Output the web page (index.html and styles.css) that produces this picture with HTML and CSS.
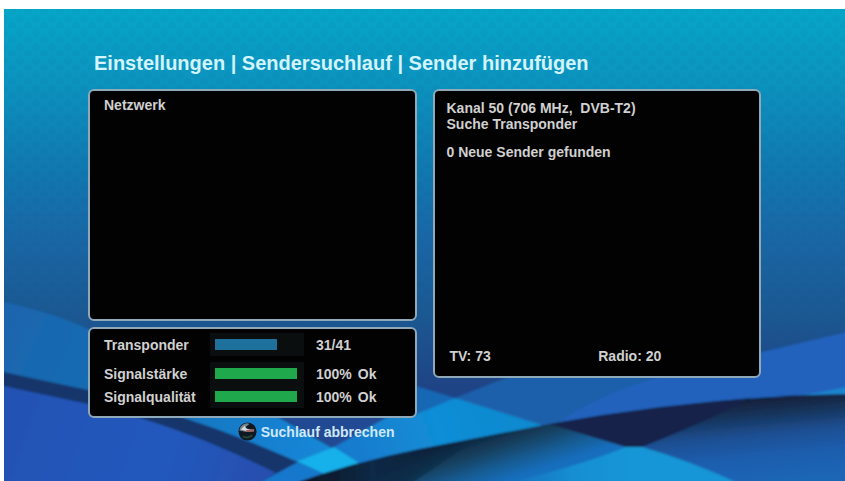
FILE: index.html
```html
<!DOCTYPE html>
<html lang="de">
<head>
<meta charset="utf-8">
<meta name="viewport" content="width=device-width, initial-scale=1">
<title>Sender hinzufügen</title>
<link rel="stylesheet" href="styles.css">
</head>
<body>
<main class="screen">
  <svg class="backdrop" viewBox="4 9 841 472" preserveAspectRatio="none" aria-hidden="true">
    <defs>
      <linearGradient id="sky" x1="0" y1="0" x2="0" y2="1">
        <stop offset="0" stop-color="#06a6c8"/>
        <stop offset=".14" stop-color="#0b95c0"/>
        <stop offset=".34" stop-color="#1178b0"/>
        <stop offset=".48" stop-color="#1967a6"/>
        <stop offset=".64" stop-color="#1b5993"/>
        <stop offset=".8" stop-color="#1f4486"/>
      </linearGradient>
      <linearGradient id="band" gradientUnits="userSpaceOnUse" x1="4" y1="320" x2="340" y2="470">
        <stop offset="0" stop-color="#1b65ae"/>
        <stop offset=".4" stop-color="#166fb4"/>
        <stop offset=".75" stop-color="#177fce"/>
        <stop offset="1" stop-color="#1589d8"/>
      </linearGradient>
      <linearGradient id="corner" gradientUnits="userSpaceOnUse" x1="20" y1="400" x2="260" y2="481">
        <stop offset="0" stop-color="#2453b4"/>
        <stop offset=".6" stop-color="#2359bc"/>
        <stop offset="1" stop-color="#264fb0"/>
      </linearGradient>
      <linearGradient id="rise" gradientUnits="userSpaceOnUse" x1="340" y1="460" x2="500" y2="400">
        <stop offset="0" stop-color="#1878cc"/>
        <stop offset=".6" stop-color="#118ed6"/>
        <stop offset="1" stop-color="#118ad0"/>
      </linearGradient>
      <linearGradient id="wave" gradientUnits="userSpaceOnUse" x1="760" y1="396" x2="768" y2="481">
        <stop offset="0" stop-color="#101d36"/>
        <stop offset=".2" stop-color="#173257"/>
        <stop offset=".45" stop-color="#1c4f92"/>
        <stop offset=".7" stop-color="#1c5dad"/>
        <stop offset="1" stop-color="#1c66b6"/>
      </linearGradient>
      <linearGradient id="teal" gradientUnits="userSpaceOnUse" x1="475" y1="436" x2="491" y2="485">
        <stop offset="0" stop-color="#0e253f"/>
        <stop offset=".35" stop-color="#15405f"/>
        <stop offset=".7" stop-color="#185c94"/>
        <stop offset="1" stop-color="#176ebc"/>
      </linearGradient>
      <linearGradient id="glow" gradientUnits="userSpaceOnUse" x1="490" y1="0" x2="630" y2="0">
        <stop offset="0" stop-color="#1480ca" stop-opacity="0"/>
        <stop offset=".6" stop-color="#148fd2"/>
        <stop offset="1" stop-color="#1296d6"/>
      </linearGradient>
      <linearGradient id="shade" gradientUnits="userSpaceOnUse" x1="300" y1="0" x2="480" y2="0">
        <stop offset="0" stop-color="#071421"/>
        <stop offset=".4" stop-color="#0d2946"/>
        <stop offset="1" stop-color="#0b1c34" stop-opacity="0"/>
      </linearGradient>
      <pattern id="grain" width="16" height="14" patternUnits="userSpaceOnUse">
        <path d="M0 3l4-3 4 3v4l-4 3-4-3zM8 10l4-3 4 3v4H8z" fill="#044f80" fill-opacity=".05"/>
      </pattern>
      <filter id="soft" x="0" y="0" width="1" height="1">
        <feGaussianBlur stdDeviation="0.8"/>
      </filter>
    </defs>
    <rect x="4" y="9" width="841" height="472" fill="url(#sky)"/>
    <rect x="4" y="9" width="841" height="340" fill="url(#grain)"/>
    <g filter="url(#soft)">
      <path d="M-6 300Q50 311 88 329L278 417L362 465L345 491H290L-6 386z" fill="url(#band)"/>
      <path d="M262 405H410L334 447z" fill="#214a93"/>
      <path d="M255 485L334 447L400 410L417 400L455 398L560 420V430L420 456L300 486z" fill="url(#rise)"/>
      <path d="M410 384L455 398L410 417z" fill="#1768b4"/>
      <path d="M455 398L510 376H680L562 425L548 427z" fill="#1d60ab"/>
      <path d="M555 425Q600 394 650 380L762 352L855 330V406L700 412z" fill="#2162bd"/>
      <path d="M790 397Q820 393 855 385V400L780 402z" fill="#1c84cf"/>
      <path d="M334 447L359 463L322 477L296 462z" fill="#13b0ea"/>
      <path d="M-6 370L88 390Q200 418 298 462L324 474L310 491H240L-6 386z" fill="#15356b"/>
      <path d="M298 462L324 474L300 491H244z" fill="#1778cc"/>
      <path d="M-6 384L88 404Q180 425 276 473L244 491H-6z" fill="url(#corner)"/>
      <path d="M290 485Q350 463 420 449L550 424Q700 396 855 394V491H290z" fill="url(#wave)"/>
      <path d="M290 485Q350 463 420 449L550 424L626 447L640 491H290z" fill="url(#teal)"/>
      <path d="M550 424Q620 411 750 398Q710 420 642 447H626z" fill="#15234a"/>
      <path d="M626 447H642Q695 462 755 491H470Q570 470 626 447z" fill="url(#glow)"/>
      <path d="M290 485Q350 463 420 449L480 438L400 491H290z" fill="url(#shade)"/>
    </g>
  </svg>

  <h1 class="title">Einstellungen | Sendersuchlauf | Sender hinzufügen</h1>

  <div class="columns">
    <div class="column">
      <section class="panel network">
        <h2 class="label">Netzwerk</h2>
      </section>
      <section class="panel status">
        <div class="row row-first">
          <label for="transponder">Transponder</label>
          <span class="track"><progress class="bar" id="transponder" value="31" max="41"></progress></span>
          <span>31/41</span>
        </div>
        <div class="row">
          <label for="strength">Signalstärke</label>
          <span class="track"><progress class="bar bar-green" id="strength" value="100" max="100"></progress></span>
          <span class="value"><span>100%</span><span>Ok</span></span>
        </div>
        <div class="row">
          <label for="quality">Signalqualität</label>
          <span class="track"><progress class="bar bar-green" id="quality" value="100" max="100"></progress></span>
          <span class="value"><span>100%</span><span>Ok</span></span>
        </div>
      </section>
      <button class="cancel" type="button">
        <svg class="cancel-icon" viewBox="0 0 20 20" aria-hidden="true">
          <circle cx="10" cy="10" r="9.500" fill="#101820"/>
          <path d="M1.500 9Q2 3 8 1.500Q10 1 12 2L7 6L13 8L17 7.500V10L9 10.500z" fill="#77858f"/>
          <path d="M3 8L7 4L9 7L15 8.500L9 9.500z" fill="#d5dadd"/>
          <path d="M9 8.500L17 7.500L16 10L8 10.500z" fill="#a65e60"/>
          <path d="M5 15Q10 18 15 14" fill="none" stroke="#23483a" stroke-width="2"/>
        </svg>
        Suchlauf abbrechen
      </button>
    </div>

    <section class="panel result">
      <p>Kanal 50 (706 MHz,&nbsp; DVB-T2)<br>Suche Transponder</p>
      <p>0 Neue Sender gefunden</p>
      <div class="totals"><span>TV: 73</span><span>Radio: 20</span></div>
    </section>
  </div>
</main>
</body>
</html>
```
FILE: styles.css
```css
* {
  box-sizing: border-box;
}

body {
  margin: 0;
  background: #fff;
  color: #d0d0d0;
  font: bold 14px/16px "Liberation Sans", Arial, sans-serif;
}

h1,
h2,
p {
  margin: 0;
  font-size: inherit;
}

.screen {
  position: relative;
  min-height: calc(100vh - 9px);
  margin: 9px 0 0 4px;
  padding: 42px 84px 32px;
  overflow: hidden;
}

.backdrop {
  position: absolute;
  inset: 0;
  width: 100%;
  height: 100%;
}

.title {
  position: relative;
  padding-left: 6px;
  margin-bottom: 14px;
  color: #d3f4fc;
  font-size: 20px;
  line-height: 24px;
}

.columns {
  position: relative;
  display: grid;
  grid-template-columns: 1fr 1fr;
  align-items: start;
  gap: 16px;
}

.column {
  display: flex;
  flex-direction: column;
  gap: 6px;
}

.panel {
  padding: 6px 14px;
  border: 2px solid #8fa9b8;
  border-radius: 6px;
  background: #020202;
}

.network {
  min-height: 232px;
}

.status {
  padding: 4px 14px 8px;
}

.row {
  display: grid;
  grid-template-columns: 106px 94px 1fr;
  align-items: center;
  min-height: 23px;
}

.row-first {
  margin-bottom: 6px;
}

.row > :last-child {
  padding-left: 12px;
}

.value {
  display: flex;
  gap: 6px;
}

.track {
  display: flex;
  align-items: center;
  height: 23px;
  padding: 0 7px 0 5px;
  background: #0b0e0e;
}

.bar {
  appearance: none;
  width: 100%;
  height: 11px;
  border: 0;
  background: transparent;
}

.bar::-webkit-progress-bar {
  background: transparent;
}

.bar::-webkit-progress-value {
  background: #1d719c;
}

.bar::-moz-progress-bar {
  background: #1d719c;
}

.bar-green::-webkit-progress-value {
  background: #1fa84c;
}

.bar-green::-moz-progress-bar {
  background: #1fa84c;
}

.cancel {
  display: flex;
  align-items: center;
  align-self: flex-end;
  gap: 4px;
  margin: -2px 22px 0 0;
  padding: 0;
  border: 0;
  background: none;
  color: #cfe8fa;
  font: inherit;
}

.cancel-icon {
  width: 19px;
  height: 19px;
}

.result {
  display: flex;
  flex-direction: column;
  gap: 12px;
  min-height: 289px;
  padding: 9px 12px 12px;
}

.totals {
  display: grid;
  grid-template-columns: 1fr 1fr;
  margin-top: auto;
  padding-left: 3px;
}
```
